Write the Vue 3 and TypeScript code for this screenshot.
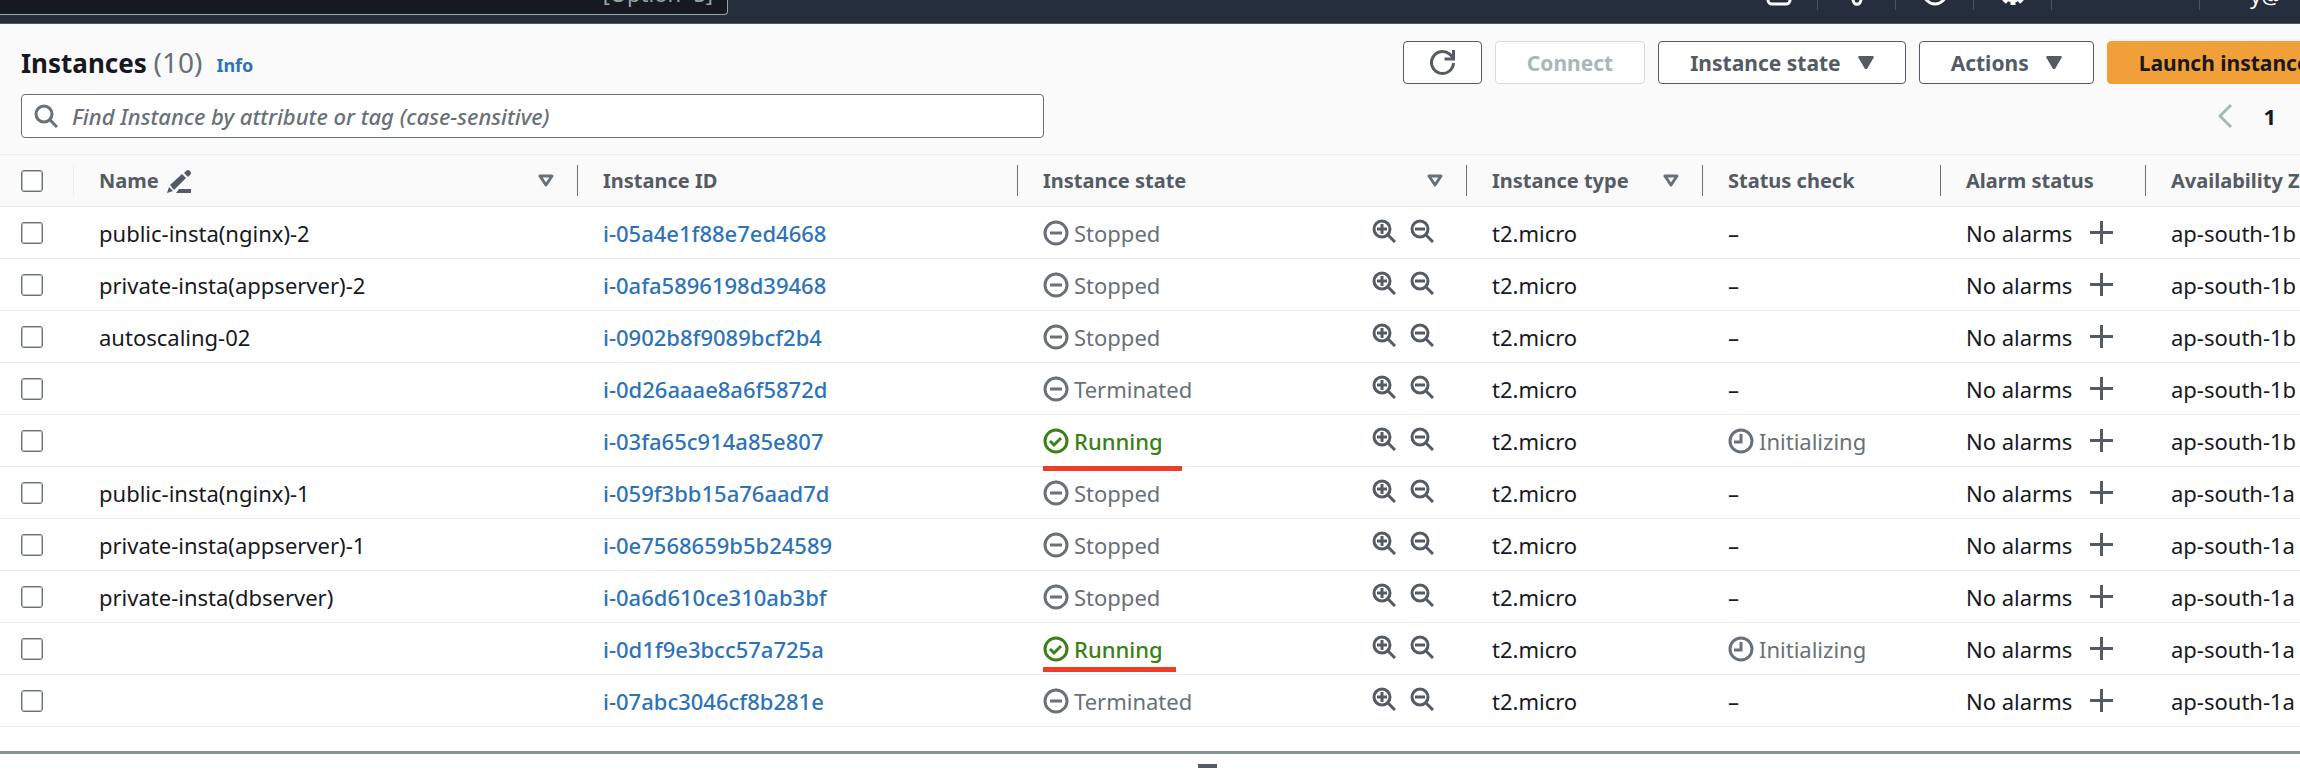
<script setup lang="ts">
import { ref } from 'vue'

type State = 'Stopped' | 'Running' | 'Terminated'
interface Instance {
  name: string
  id: string
  state: State
  zone: string
  mark?: 'below' | 'inside'
}

const query = ref('')
const instances: Instance[] = [
  { name: 'public-insta(nginx)-2', id: 'i-05a4e1f88e7ed4668', state: 'Stopped', zone: 'ap-south-1b' },
  { name: 'private-insta(appserver)-2', id: 'i-0afa5896198d39468', state: 'Stopped', zone: 'ap-south-1b' },
  { name: 'autoscaling-02', id: 'i-0902b8f9089bcf2b4', state: 'Stopped', zone: 'ap-south-1b' },
  { name: '', id: 'i-0d26aaae8a6f5872d', state: 'Terminated', zone: 'ap-south-1b' },
  { name: '', id: 'i-03fa65c914a85e807', state: 'Running', zone: 'ap-south-1b', mark: 'below' },
  { name: 'public-insta(nginx)-1', id: 'i-059f3bb15a76aad7d', state: 'Stopped', zone: 'ap-south-1a' },
  { name: 'private-insta(appserver)-1', id: 'i-0e7568659b5b24589', state: 'Stopped', zone: 'ap-south-1a' },
  { name: 'private-insta(dbserver)', id: 'i-0a6d610ce310ab3bf', state: 'Stopped', zone: 'ap-south-1a' },
  { name: '', id: 'i-0d1f9e3bcc57a725a', state: 'Running', zone: 'ap-south-1a', mark: 'inside' },
  { name: '', id: 'i-07abc3046cf8b281e', state: 'Terminated', zone: 'ap-south-1a' },
]
const columns = [
  { key: 'name', label: 'Name', sort: true },
  { key: 'id', label: 'Instance ID', sort: false },
  { key: 'state', label: 'Instance state', sort: true },
  { key: 'type', label: 'Instance type', sort: true },
  { key: 'check', label: 'Status check', sort: false },
  { key: 'alarm', label: 'Alarm status', sort: false },
  { key: 'zone', label: 'Availability Zone', sort: false },
]
</script>

<template>
  <div class="console">
    <header class="topbar">
      <div class="global-search"><kbd>[Option+S]</kbd></div>
      <nav class="tools">
        <button class="tool" type="button" aria-label="CloudShell">
          <svg width="26" height="26" viewBox="0 0 26 26"><rect x="2" y="2" width="22" height="22" rx="4" /><path d="M7 8l5 5-5 5M14 18h6" /></svg>
        </button>
        <button class="tool" type="button" aria-label="Notifications">
          <svg width="26" height="26" viewBox="0 0 26 26"><path d="M3 18c4-3 3-8 4-11 2-6 10-6 12 0 1 3 0 8 4 11z" /><path d="M9 19c0 7 8 7 8 0" /></svg>
        </button>
        <button class="tool" type="button" aria-label="Help">
          <svg width="26" height="26" viewBox="0 0 26 26"><circle cx="13" cy="13" r="11" /><path d="M9 10c0-5 8-5 8-1 0 3-4 3-4 6M13 17v3" /></svg>
        </button>
        <button class="tool" type="button" aria-label="Settings">
          <svg width="26" height="26" viewBox="0 0 26 26"><circle cx="13" cy="13" r="8" /><circle cx="13" cy="13" r="3" /><path class="cogs" d="M13 1v4M13 21v4M1 13h4M21 13h4M4 4l4 4M18 18l4 4M22 4l-4 4M8 18l-4 4" /></svg>
        </button>
        <div class="region"></div>
        <div class="account">y@</div>
      </nav>
    </header>

    <main>
      <section class="head">
        <div class="toolbar">
          <h1>Instances <span>(10)</span></h1>
          <a class="info" href="#info">Info</a>
          <div class="actions">
            <button class="btn icon-only" type="button" aria-label="Refresh">
              <svg width="27" height="27" viewBox="0 0 27 27" fill="none" stroke="currentColor" stroke-width="3"><path d="M24.500 14a11 11 0 1 1-4-9l4 4" /><path d="M24.500 1v9h-9" /></svg>
            </button>
            <button class="btn" type="button" disabled>Connect</button>
            <button class="btn" type="button">Instance state <svg width="16" height="13" viewBox="0 0 16 13" fill="currentColor"><path d="M1 0h14l1 1-7 12H7L0 1z" /></svg></button>
            <button class="btn" type="button">Actions <svg width="16" height="13" viewBox="0 0 16 13" fill="currentColor"><path d="M1 0h14l1 1-7 12H7L0 1z" /></svg></button>
            <button class="btn primary" type="button">Launch instances</button>
          </div>
        </div>
        <div class="filters">
          <div class="search">
            <svg width="24" height="24" viewBox="0 0 24 24" fill="none" stroke="currentColor" stroke-width="3"><circle cx="10" cy="10" r="8" /><path d="M16 16l7 7" /></svg>
            <input v-model="query" type="text" aria-label="Find Instance" placeholder="Find Instance by attribute or tag (case-sensitive)" />
          </div>
          <nav class="pages">
            <button type="button" aria-label="Previous page" disabled>
              <svg width="14" height="24" viewBox="0 0 14 24" fill="none" stroke="currentColor" stroke-width="3"><path d="M13 1L2 12l11 11" /></svg>
            </button>
            <button class="current" type="button">1</button>
          </nav>
        </div>
      </section>

      <table>
        <colgroup>
          <col class="c-pick" />
          <col v-for="c in columns" :key="c.key" :class="'c-' + c.key" />
        </colgroup>
        <thead>
          <tr>
            <th><div class="cell pick"><input type="checkbox" aria-label="Select all instances" /></div></th>
            <th v-for="c in columns" :key="c.key" scope="col">
              <div class="cell">
                {{ c.label }}
                <svg v-if="c.key === 'name'" class="edit" width="24" height="24" viewBox="0 0 24 24" fill="currentColor"><path d="M0 24l2-6 4 4zM3 16L15 5l4 4L7 21zM17 4l2-2q2-2 4 0t0 4l-2 2zM9 24l3-4h12v4z" /></svg>
                <button v-if="c.sort" class="sort" type="button" :aria-label="'Sort by ' + c.label">
                  <svg width="16" height="13" viewBox="0 0 16 13" fill="none" stroke="currentColor" stroke-width="3" stroke-linejoin="round"><path d="M2 2h12L8 11z" /></svg>
                </button>
              </div>
            </th>
          </tr>
        </thead>
        <tbody>
          <tr v-for="i in instances" :key="i.id">
            <td><div class="pick"><input type="checkbox" :aria-label="'Select ' + i.id" /></div></td>
            <td>{{ i.name }}</td>
            <td><a :href="'#' + i.id">{{ i.id }}</a></td>
            <td class="state-cell">
              <div class="row">
                <span class="status" :class="{ running: i.state === 'Running' }">
                  <svg width="26" height="26" viewBox="0 0 26 26" fill="none" stroke="currentColor" stroke-width="3"><circle cx="13" cy="13" r="11" /><path v-if="i.state === 'Running'" d="M7 13l4 4 7-7" /><path v-else d="M7 13h12" /></svg>
                  {{ i.state }}
                </span>
                <span class="lenses">
                  <button type="button" aria-label="Filter for this state">
                    <svg width="24" height="24" viewBox="0 0 24 24" fill="none" stroke="currentColor" stroke-width="3"><circle cx="10" cy="10" r="8" /><path d="M16 16l7 7M10 5v10M5 10h10" /></svg>
                  </button>
                  <button type="button" aria-label="Exclude this state">
                    <svg width="24" height="24" viewBox="0 0 24 24" fill="none" stroke="currentColor" stroke-width="3"><circle cx="10" cy="10" r="8" /><path d="M16 16l7 7M5 10h10" /></svg>
                  </button>
                </span>
              </div>
              <i v-if="i.mark" class="mark" :class="i.mark"></i>
            </td>
            <td>t2.micro</td>
            <td>
              <span v-if="i.state === 'Running'" class="status">
                <svg width="26" height="26" viewBox="0 0 26 26" fill="none" stroke="currentColor" stroke-width="3"><circle cx="13" cy="13" r="11" /><path d="M13 6v8H6" /></svg>
                Initializing
              </span>
              <template v-else>–</template>
            </td>
            <td>
              <div class="alarm">No alarms
                <button type="button" aria-label="Create alarm"><svg width="23" height="23" viewBox="0 0 23 23" stroke="currentColor" stroke-width="3"><path d="M11.500 0v23M0 11.500h23" /></svg></button>
              </div>
            </td>
            <td>{{ i.zone }}</td>
          </tr>
        </tbody>
      </table>
    </main>

    <footer class="split">
      <button type="button" aria-label="Resize details panel"></button>
    </footer>
  </div>
</template>

<style>
body {
  background: #fff;
}
</style>

<style scoped>
.console {
  overflow: hidden;
  font-family: 'Noto Sans', 'Open Sans', sans-serif;
  font-size: 22px;
  line-height: 30px;
  color: #16191f;
}
.console * {
  box-sizing: border-box;
}
button {
  margin: 0;
  padding: 0;
  border: 0;
  background: none;
  font: inherit;
  color: #545b64;
  display: flex;
  align-items: center;
}
svg {
  display: block;
  flex: none;
}
.topbar {
  height: 24px;
  overflow: hidden;
  background: #252e3d;
  border-bottom: 1px solid #545b64;
  display: flex;
  justify-content: space-between;
}
.global-search {
  width: 728px;
  height: 15px;
  padding: 0 14px 6px;
  background: #16191f;
  border: solid #95a5a6;
  border-width: 0 1px 1px 0;
  border-radius: 0 0 4px 0;
  display: flex;
  align-items: flex-end;
  justify-content: flex-end;
}
kbd {
  font: inherit;
  color: #95a5a6;
}
.tools {
  display: flex;
  height: 10px;
}
.tool,
.region {
  width: 78px;
  height: 10px;
  padding-bottom: 4px;
  border-right: 1px solid #4b535e;
  justify-content: center;
  align-items: flex-end;
}
.region {
  width: 148px;
}
.tool svg {
  fill: none;
  stroke: #fff;
  stroke-width: 3px;
}
.tool .cogs {
  stroke-width: 5px;
}
.account {
  width: 100px;
  padding: 0 0 0 50px;
  color: #fff;
  display: flex;
  align-items: flex-end;
}
.head {
  padding: 17px 0 16px 21px;
  background: #fafafa;
}
.toolbar {
  display: flex;
  align-items: center;
  margin-right: -52px;
}
h1 {
  margin: 0;
  font-size: 26px;
  font-weight: 700;
}
h1 span {
  font-size: 28px;
  font-weight: 400;
  color: #687078;
}
.info {
  margin: 4px 0 0 14px;
  font-size: 18px;
  font-weight: 700;
}
a {
  color: #2e73b8;
  font-weight: 500;
  text-decoration: none;
}
.actions {
  display: flex;
  gap: 13px;
  margin-left: auto;
}
.btn {
  height: 43px;
  padding: 0 31px;
  gap: 17px;
  border: 1px solid #545b64;
  border-radius: 4px;
  background: #fff;
  font-size: 21px;
  font-weight: 700;
  white-space: nowrap;
}
.icon-only {
  padding: 0 25px;
}
.btn:disabled {
  color: #aab7b8;
  border-color: #d5dbdb;
}
.primary {
  color: #16191f;
  background: #f19f38;
  border-color: #f19f38;
}
.filters {
  display: flex;
  justify-content: space-between;
  align-items: center;
  margin-top: 10px;
}
.search {
  width: 1023px;
  height: 44px;
  padding: 0 12px;
  display: flex;
  align-items: center;
  gap: 14px;
  color: #687078;
  background: #fff;
  border: 1px solid #687078;
  border-radius: 4px;
}
.search input {
  flex: 1;
  padding: 0;
  border: 0;
  outline: 0;
  background: none;
  font: inherit;
  color: #16191f;
}
.search input::placeholder {
  color: #687078;
  font-style: italic;
  font-weight: 500;
  opacity: 1;
}
.pages {
  display: flex;
  gap: 31px;
  padding-right: 24px;
}
.pages button:disabled {
  color: #aab7b8;
}
.pages .current {
  color: #16191f;
  font-weight: 700;
}
table {
  width: 100%;
  table-layout: fixed;
  border-collapse: separate;
  border-spacing: 0;
  border-top: 1px solid #eaeded;
}
.c-pick { width: 74px; }
.c-name { width: 504px; }
.c-id { width: 440px; }
.c-state { width: 449px; }
.c-type { width: 236px; }
.c-check { width: 238px; }
.c-alarm { width: 205px; }
th,
td {
  height: 52px;
  padding: 0 0 0 25px;
  border-bottom: 1px solid #eaeded;
  text-align: left;
  white-space: nowrap;
}
th {
  padding: 0;
  background: #fafafa;
  color: #545b64;
  font-size: 20px;
  font-weight: 700;
}
th .cell {
  height: 31px;
  padding: 0 23px 0 25px;
  border-right: 1px solid #687078;
  display: flex;
  align-items: center;
}
th:last-child .cell {
  border-right: 0;
  padding-right: 0;
}
td:first-child {
  padding: 0;
}
th .pick {
  border-color: #eaeded;
}
th .pick,
.pick {
  padding: 0 0 0 21px;
  display: flex;
  align-items: center;
}
.pick input {
  appearance: none;
  width: 22px;
  height: 22px;
  margin: 0;
  background: #fff;
  border: 1px solid #687078;
  border-radius: 3px;
  box-shadow: inset 0 0 0 1px #bcc1c5;
}
.edit {
  margin-left: 8px;
}
.sort {
  margin-left: auto;
  color: #687078;
}
.state-cell {
  position: relative;
}
.row {
  display: flex;
  justify-content: space-between;
  padding-right: 33px;
}
.status {
  display: flex;
  align-items: center;
  gap: 5px;
  color: #687078;
}
.running {
  color: #3a8017;
  font-weight: 500;
}
.lenses {
  display: flex;
  gap: 14px;
  padding-bottom: 4px;
}
.alarm {
  display: flex;
  align-items: center;
  gap: 18px;
}
.mark {
  position: absolute;
  left: 25px;
  height: 5px;
  background: #eb4026;
}
.below {
  width: 139px;
  bottom: -5px;
  z-index: 1;
}
.inside {
  width: 133px;
  bottom: 2px;
}
.split {
  margin-top: 24px;
  border-top: 3px solid #879596;
  display: flex;
  justify-content: center;
  padding: 10px 0 2px;
}
.split button {
  width: 19px;
  height: 4px;
  margin-left: 114px;
  background: #545b64;
}
</style>
